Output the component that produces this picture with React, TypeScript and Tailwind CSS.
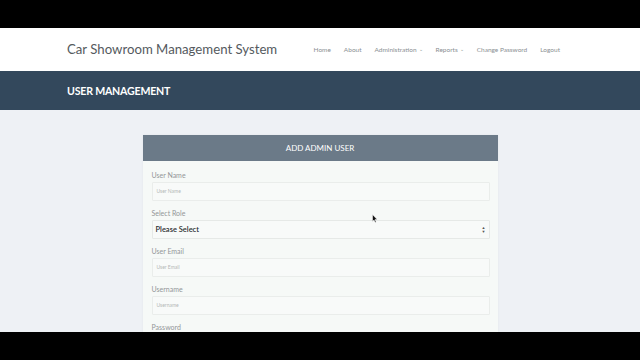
import React from 'react';

const fields = [
  { label: 'User Name', placeholder: 'User Name', type: 'input' },
  { label: 'Select Role', placeholder: 'Please Select', type: 'select' },
  { label: 'User Email', placeholder: 'User Email', type: 'input' },
  { label: 'Username', placeholder: 'Username', type: 'input' },
  { label: 'Password', placeholder: 'Password', type: 'input' },
];

const navLinks = ['Home', 'About', 'Administration', 'Reports', 'Change Password', 'Logout'];
const dropdowns = ['Administration', 'Reports'];

const App: React.FC = () => {
  return (
    <div className="h-[360px] w-[640px] flex flex-col overflow-hidden bg-black font-['Lato','Open_Sans',sans-serif]">
      {/* letterbox top */}
      <div className="h-[28px] shrink-0 bg-black" />

      <div className="flex-1 overflow-hidden flex flex-col bg-[#eef1f5] relative">
        {/* NAVBAR */}
        <div className="h-[43px] shrink-0 bg-white flex items-center justify-between pl-[67px] pr-[80px]">
          <span className="text-[13.2px] text-[#555a5e]">Car Showroom Management System</span>
          <nav className="flex items-center gap-[13px] text-[6.5px] text-[#8a8f93] pt-[1px]">
            {navLinks.map(link => (
              <span key={link} className="flex items-center">
                {link}
                {dropdowns.includes(link) && <span className="ml-[2px] text-[5px]">&#8964;</span>}
              </span>
            ))}
          </nav>
        </div>

        {/* PAGE TITLE */}
        <div className="h-[39px] shrink-0 bg-[#33485c] flex items-center pl-[67px] pt-[3px]">
          <h1 className="text-[10.6px] font-bold text-white tracking-[-0.2px]">USER MANAGEMENT</h1>
        </div>

        {/* CARD */}
        <div className="pt-[25px]">
          <div className="w-[355px] mx-auto bg-[#f6f9f7] shadow-[0_0_2px_rgba(0,0,0,0.06)]">
            <div className="h-[26px] bg-[#6b7a88] flex items-center justify-center">
              <span className="text-[8px] text-white">ADD ADMIN USER</span>
            </div>
            <div className="pl-[9px] pr-[8px] pt-[10px]">
              {fields.map(f => (
                <div key={f.label} className="mb-[8px]">
                  <label className="block h-[8px] leading-[8px] text-[7px] text-[#939698] mb-[3px]">{f.label}</label>
                  {f.type === 'select' ? (
                    <div className="h-[19px] border border-[#e6e9e7] bg-[#f8faf9] rounded-[1px] flex items-center justify-between pl-[3px] pr-[3px]">
                      <span className="text-[7.5px] font-semibold text-[#2b2e30]">{f.placeholder}</span>
                      <span className="flex flex-col items-center leading-none text-[4px] text-[#555]">
                        <span>&#9650;</span>
                        <span>&#9660;</span>
                      </span>
                    </div>
                  ) : (
                    <div className="h-[19px] border border-[#eaedeb] bg-[#f8faf9] rounded-[1px] flex items-center pl-[4px]">
                      <span className="text-[5px] text-[#b4b8b6]">{f.placeholder}</span>
                    </div>
                  )}
                </div>
              ))}
            </div>
          </div>
        </div>

        {/* mouse cursor */}
        <svg className="absolute left-[372px] top-[186px]" width="6" height="9" viewBox="0 0 6 9">
          <path d="M0.5 0.5 L0.5 7.5 L2 6 L3.2 8.5 L4.2 8 L3 5.6 L5.2 5.6 Z" fill="#111" stroke="#fff" strokeWidth="0.5" />
        </svg>
      </div>

      {/* letterbox bottom */}
      <div className="h-[28px] shrink-0 bg-black" />
    </div>
  );
};

export default App;
